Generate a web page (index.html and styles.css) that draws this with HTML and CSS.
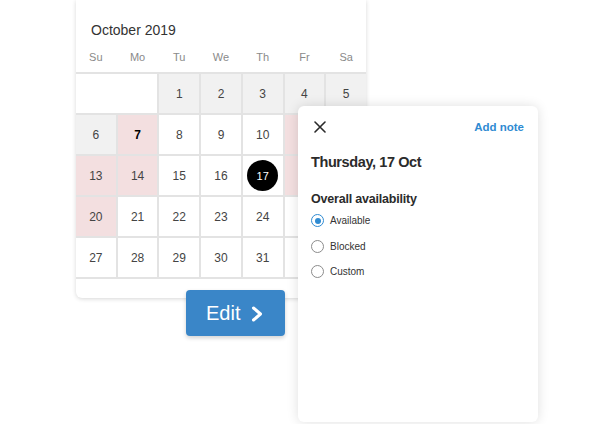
FILE: index.html
```html
<!DOCTYPE html>
<html>
<head>
<meta charset="utf-8">
<link rel="stylesheet" href="styles.css">
</head>
<body>
<div class="stage">
  <div class="calendar">
    <div class="cal-title">October 2019</div>
    <div class="weekdays">
      <span>Su</span><span>Mo</span><span>Tu</span><span>We</span><span>Th</span><span>Fr</span><span>Sa</span>
    </div>
    <div class="grid">
      <div class="cell span2"></div>
      <div class="cell past">1</div>
      <div class="cell past">2</div>
      <div class="cell past">3</div>
      <div class="cell past">4</div>
      <div class="cell past">5</div>

      <div class="cell past">6</div>
      <div class="cell blocked today">7</div>
      <div class="cell">8</div>
      <div class="cell">9</div>
      <div class="cell">10</div>
      <div class="cell blocked"></div>
      <div class="cell"></div>

      <div class="cell blocked">13</div>
      <div class="cell blocked">14</div>
      <div class="cell">15</div>
      <div class="cell">16</div>
      <div class="cell"><span class="selected">17</span></div>
      <div class="cell blocked"></div>
      <div class="cell"></div>

      <div class="cell blocked">20</div>
      <div class="cell">21</div>
      <div class="cell">22</div>
      <div class="cell">23</div>
      <div class="cell">24</div>
      <div class="cell"></div>
      <div class="cell"></div>

      <div class="cell">27</div>
      <div class="cell">28</div>
      <div class="cell">29</div>
      <div class="cell">30</div>
      <div class="cell">31</div>
      <div class="cell"></div>
      <div class="cell"></div>
    </div>
  </div>

  <button class="edit-btn">
    <span>Edit</span>
    <svg class="chev" width="12" height="16" viewBox="0 0 12 16"><path d="M2.5 2 L9.5 8 L2.5 14" fill="none" stroke="#fff" stroke-width="3" stroke-linecap="round" stroke-linejoin="round"/></svg>
  </button>

  <div class="panel">
    <div class="panel-head">
      <svg class="close" width="12" height="12" viewBox="0 0 12 12"><path d="M1 1 L11 11 M11 1 L1 11" fill="none" stroke="#2a2a2a" stroke-width="1.6" stroke-linecap="round"/></svg>
      <a class="add-note">Add note</a>
    </div>
    <div class="panel-title">Thursday, 17 Oct</div>
    <div class="panel-sub">Overall availability</div>
    <div class="radios">
      <label class="radio"><span class="dot on"></span>Available</label>
      <label class="radio"><span class="dot"></span>Blocked</label>
      <label class="radio"><span class="dot"></span>Custom</label>
    </div>
  </div>
</div>
</body>
</html>
```
FILE: styles.css
```css
html, body {
  margin: 0;
  padding: 0;
  background: #fff;
}
body {
  width: 605px;
  height: 424px;
  overflow: hidden;
  font-family: "Liberation Sans", Arial, sans-serif;
}
.stage {
  position: relative;
  width: 605px;
  height: 424px;
  padding-left: 76px;
  box-sizing: border-box;
}
.calendar {
  width: 290px;
  background: #fff;
  border-radius: 0 0 6px 6px;
  box-shadow: 0 1px 4px rgba(0, 0, 0, 0.16);
  padding-bottom: 19px;
}
.cal-title {
  padding: 21px 15px 0;
  font-size: 14px;
  line-height: 18px;
  color: #333;
}
.weekdays {
  display: grid;
  grid-template-columns: repeat(7, 1fr);
  column-gap: 2px;
  height: 18px;
  padding: 9px 0 6px;
  font-size: 11px;
  line-height: 18px;
  color: #8a8a8a;
  text-align: center;
}
.grid {
  display: grid;
  grid-template-columns: repeat(7, 1fr);
  grid-auto-rows: 39px;
  gap: 2px;
  padding: 2px 0;
  background: #e3e3e3;
}
.cell {
  background: #fff;
  display: flex;
  align-items: center;
  justify-content: center;
  font-size: 12px;
  color: #444;
}
.span2 { grid-column: span 2; }
.past { background: #f1f1f1; }
.blocked { background: #f3dfe0; }
.today { font-weight: bold; color: #000; }
.selected {
  width: 31px;
  height: 31px;
  border-radius: 50%;
  background: #000;
  color: #fff;
  display: flex;
  align-items: center;
  justify-content: center;
  font-size: 11px;
}
.edit-btn {
  position: absolute;
  left: 186px;
  top: 290px;
  width: 99px;
  height: 46px;
  border: 0;
  border-radius: 4px;
  background: #3a86c8;
  box-shadow: 0 2px 4px rgba(0, 0, 0, 0.18);
  color: #fff;
  font-family: "Liberation Sans", Arial, sans-serif;
  font-size: 20px;
  display: flex;
  align-items: center;
  padding: 0 0 0 20px;
  gap: 11px;
}
.chev { display: block; margin-top: 1px; }
.panel {
  position: absolute;
  left: 298px;
  top: 106px;
  width: 240px;
  height: 316px;
  background: #fff;
  border-radius: 6px;
  box-shadow: 0 0 12px rgba(0, 0, 0, 0.13);
  box-sizing: border-box;
  padding: 13px 14px 0 13px;
  color: #2b2b2b;
}
.panel-head {
  display: flex;
  justify-content: space-between;
  align-items: center;
  height: 16px;
}
.close { display: block; margin-left: 3px; }
.add-note {
  font-size: 11.5px;
  font-weight: bold;
  color: #2f8bd2;
}
.panel-title {
  margin-top: 17px;
  font-size: 14.5px;
  line-height: 20px;
  font-weight: bold;
  letter-spacing: -0.4px;
}
.panel-sub {
  margin-top: 18px;
  font-size: 12.5px;
  line-height: 18px;
  font-weight: bold;
  letter-spacing: -0.2px;
}
.radios {
  margin-top: 0;
}
.radio {
  display: flex;
  align-items: center;
  height: 25.5px;
  font-size: 10px;
  color: #333;
  gap: 6px;
}
.dot {
  width: 11px;
  height: 11px;
  border: 1px solid #8c8c8c;
  border-radius: 50%;
  box-sizing: content-box;
  display: flex;
  align-items: center;
  justify-content: center;
}
.dot.on { border-color: #2f8bd2; }
.dot.on::after {
  content: "";
  width: 6px;
  height: 6px;
  border-radius: 50%;
  background: #2f8bd2;
}
```
